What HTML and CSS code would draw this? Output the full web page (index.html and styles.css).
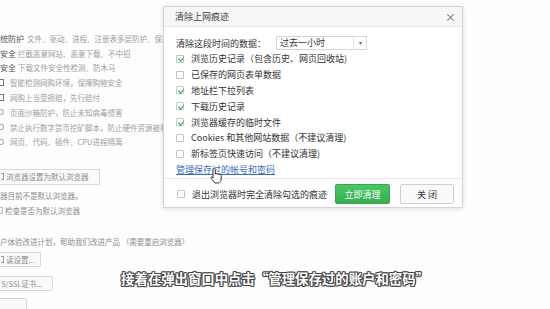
FILE: index.html
```html
<!DOCTYPE html>
<html lang="zh-CN">
<head>
    <meta charset="UTF-8">
    <title>清除上网痕迹</title>
    <link rel="stylesheet" href="styles.css">
</head>
<body>
<div class="screen">
    <div class="settings">
        <div class="feat"><span class="name">统防护</span><span class="desc first">文件、驱动、进程、注册表多层防护、保护</span></div>
        <div class="feat"><span class="name">安全</span><span class="desc">拦截恶意网站、恶意下载、不中招</span></div>
        <div class="feat"><span class="name">安全</span><span class="desc">下载文件安全性检测、防木马</span></div>
        <div class="feat"><span class="stub dark"></span><span class="desc short">智能检测网购环境，保障购物安全</span></div>
        <div class="feat"><span class="stub dark"></span><span class="desc short">网购上当受损赔，先行赔付</span></div>
        <div class="feat"><span class="stub"></span><span class="desc short">页面沙箱防护，防止未知病毒侵害</span></div>
        <div class="feat"><span class="stub"></span><span class="desc short">禁止执行数字货币挖矿脚本，防止硬件资源被利用</span></div>
        <div class="feat"><span class="stub"></span><span class="desc short">网页、代码、插件、CPU进程隔离</span></div>

        <div class="btn first-btn"><span class="stub in"></span>浏览器设置为默认浏览器</div>
        <div class="line">器目前不是默认浏览器。</div>
        <div class="line"><span class="box"></span>检查是否为默认浏览器</div>

        <div class="line gap">户体验改进计划，帮助我们改进产品 （需要重启浏览器）</div>
        <div class="btn small"><span class="stub in"></span>读设置...</div>
        <div class="btn small">S/SSL证书...</div>
        <div class="btn small tail"></div>
    </div>

    <div class="dialog">
        <div class="dlg_head">
            <span>清除上网痕迹</span>
            <span class="close">×</span>
        </div>
        <div class="dlg_body">
            <div class="range">
                <span>清除这段时间的数据：</span>
                <div class="select"><span>过去一小时</span><span class="arrow">▾</span></div>
            </div>
            <div class="opt"><span class="check on"></span>浏览历史记录（包含历史、网页回收站)</div>
            <div class="opt"><span class="check"></span>已保存的网页表单数据</div>
            <div class="opt"><span class="check on"></span>地址栏下拉列表</div>
            <div class="opt"><span class="check on"></span>下载历史记录</div>
            <div class="opt"><span class="check on"></span>浏览器缓存的临时文件</div>
            <div class="opt"><span class="check"></span>Cookies 和其他网站数据（不建议清理)</div>
            <div class="opt"><span class="check"></span>新标签页快速访问（不建议清理)</div>
            <div class="opt"><a class="manage" href="#">管理保存过的帐号和密码</a></div>
        </div>
        <div class="dlg_foot">
            <div class="opt exit"><span class="check"></span>退出浏览器时完全清除勾选的痕迹</div>
            <button class="go">立即清理</button>
            <button class="shut">关 闭</button>
        </div>
        <svg class="hand" width="13" height="17" viewBox="0 0 13 17">
            <path d="M4 1c.8 0 1.3.5 1.3 1.3V7c.3-.5 1.8-.6 2 .3.4-.6 1.8-.5 2 .4.4-.5 1.9-.4 1.9.7V12c0 2-1 3.5-2.5 4H5C4 15 2.6 13 1.2 11.3c-.6-.8.3-1.9 1.2-1.2L3 11V2.3C3 1.5 3.3 1 4 1z" fill="#fff" stroke="#222" stroke-width="0.9"/>
        </svg>
    </div>

    <p class="caption">接着在弹出窗口中点击“管理保存过的账户和密码”</p>
</div>
</body>
</html>
```

FILE: styles.css
```css
* {
    box-sizing: border-box;
}
body {
    margin: 0;
    background: #fdfdfd;
    font-family: "Noto Sans CJK SC", "Noto Sans", sans-serif;
}
.screen {
    position: relative;
    width: 550px;
    height: 309px;
    overflow: hidden;
}

/* 背景の設定ページ */
.settings {
    padding-top: 31px;
    font-size: 7.5px;
    color: #9e9e9e;
}
.feat {
    display: flex;
    align-items: center;
    height: 14.8px;
    white-space: nowrap;
}
.name {
    display: inline-block;
    color: #555;
    font-size: 8px;
    width: 18px;
}
.feat .name + .first {
    margin-left: 9px;
}
/* 左端で切れているアイコンの残り */
.stub {
    display: inline-block;
    width: 4px;
    height: 6px;
    border: 1px solid #aaa;
    border-left: none;
    border-radius: 0 3px 3px 0;
}
.stub.dark {
    border-color: #777;
    border-radius: 0;
    height: 7px;
}
.stub.in {
    width: 3px;
    height: 7px;
    border-color: #999;
    border-radius: 0;
    margin-right: 2px;
}
.desc.short {
    margin-left: 6px;
}
.btn {
    display: flex;
    align-items: center;
    width: 100px;
    height: 16px;
    margin-top: 19.5px;
    border: 1px solid #d8d8d8;
    border-left: none;
    background: #fafafa;
    color: #8c8c8c;
    white-space: nowrap;
    padding-left: 1px;
    border-radius: 0 2px 2px 0;
}
.line {
    display: flex;
    align-items: center;
    height: 15px;
    white-space: nowrap;
    color: #8e8e8e;
}
.first-btn + .line {
    margin-top: 3px;
}
.line .box {
    width: 3px;
    height: 7px;
    border: 1px solid #bbb;
    border-left: none;
    margin-right: 2px;
}
.line.gap {
    margin-top: 16px;
}
.btn.small {
    width: 41px;
    height: 15px;
    margin-top: 3px;
}
.btn.small + .btn.small {
    width: 53px;
    margin-top: 9px;
}
.btn.tail {
    width: 27px !important;
    margin-top: 7px !important;
}

/* ダイアログ */
.dialog {
    position: absolute;
    left: 163px;
    top: 6px;
    width: 300px;
    height: 202px;
    background: #fff;
    border: 1px solid #d4d4d4;
    box-shadow: 0 1px 5px rgba(0, 0, 0, 0.12);
    font-size: 9px;
    color: #333;
}
.dlg_head {
    display: flex;
    justify-content: space-between;
    align-items: center;
    height: 20px;
    padding: 0 6px 0 11px;
    background: #f6f6f6;
    border-bottom: 1px solid #e6e6e6;
    color: #444;
}
.close {
    font-size: 11px;
    color: #666;
}
.dlg_body {
    padding: 9px 12px 0 12px;
}
.range {
    display: flex;
    align-items: center;
    height: 14px;
    margin-bottom: 1px;
}
.select {
    display: flex;
    justify-content: space-between;
    width: 91px;
    height: 14px;
    margin-left: 10px;
    border: 1px solid #d6d6d6;
    line-height: 12px;
    padding-left: 3px;
}
.arrow {
    width: 13px;
    border-left: 1px solid #e2e2e2;
    text-align: center;
    font-size: 6px;
    color: #666;
}
.opt {
    display: flex;
    align-items: center;
    height: 15.8px;
    white-space: nowrap;
}
.check {
    position: relative;
    width: 8px;
    height: 8px;
    margin-right: 7px;
    border: 1px solid #c4c4c4;
    border-radius: 1px;
    background: #fff;
}
.check.on::after {
    content: "";
    position: absolute;
    left: 1.5px;
    top: 0.5px;
    width: 3px;
    height: 4px;
    border: solid #2fa845;
    border-width: 0 1.3px 1.3px 0;
    transform: rotate(40deg);
}
.manage {
    color: #3b6db8;
    text-decoration: underline;
}
.dlg_foot {
    display: flex;
    align-items: center;
    height: 30px;
    margin-top: 1px;
    padding: 1px 8px 0 13px;
    border-top: 1px solid #e8e8e8;
}
.exit {
    flex: 1;
}
button {
    height: 20px;
    font-family: inherit;
    font-size: 9px;
    border-radius: 2px;
    padding: 0;
}
.go {
    width: 55px;
    border: 1px solid #34a64c;
    background: linear-gradient(#4cc464, #37ae50);
    color: #fff;
}
.shut {
    width: 54px;
    margin-left: 10px;
    border: 1px solid #cfcfcf;
    background: #fafafa;
    color: #333;
}
.hand {
    position: absolute;
    left: 46px;
    top: 160px;
}

/* 字幕 */
.caption {
    position: absolute;
    left: 121px;
    top: 268px;
    margin: 0;
    font-size: 13.4px;
    line-height: 20px;
    color: #fff;
    font-weight: bold;
    text-shadow: -1px 0 #444, 1px 0 #444, 0 -1px #444, 0 1px #444, 1px 1px #555, -1px -1px #555, 1px -1px #555, -1px 1px #555;
    white-space: nowrap;
}
```
